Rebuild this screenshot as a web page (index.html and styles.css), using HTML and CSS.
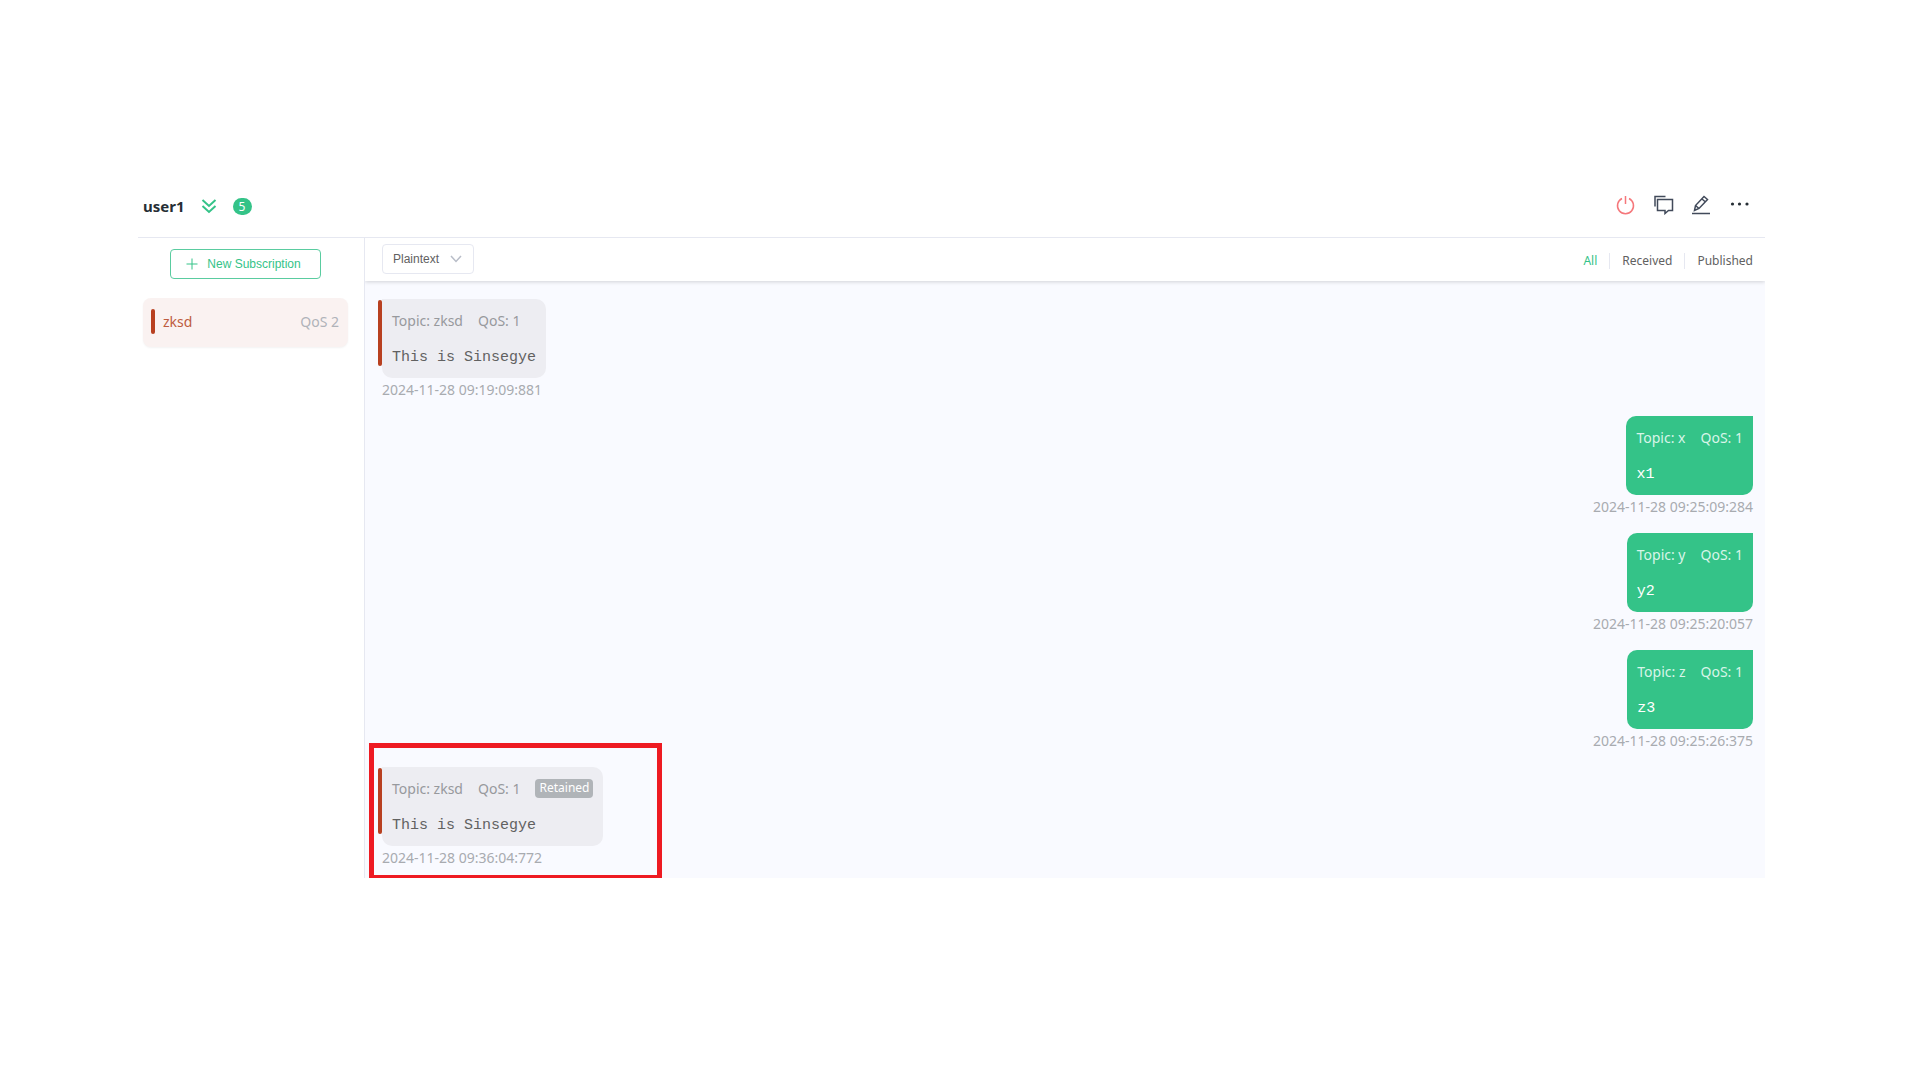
FILE: index.html
```html
<!DOCTYPE html>
<html lang="en">
<head>
    <meta charset="UTF-8" />
    <title>user1</title>
    <link rel="stylesheet" href="styles.css">
</head>
<body>

<div class="connection">
    <header class="topbar">
        <h2>user1</h2>
        <button class="icon-btn collapse" aria-label="Show details">
            <svg width="16" height="16" viewBox="0 0 16 16"><path d="M1.5 2L8 8l6.5-6M1.5 8L8 14l6.5-6" /></svg>
        </button>
        <span class="count">5</span>
        <div class="actions">
            <button class="icon-btn power" aria-label="Disconnect">
                <svg width="20" height="20" viewBox="0 0 20 20"><path d="M9.5 1v8M6 3.5a8 8 0 1 0 7 0" /></svg>
            </button>
            <button class="icon-btn" aria-label="New window">
                <svg width="20" height="20" viewBox="0 0 20 20"><path d="M1 11.500V1.500h10.500M3.500 4.500h15v11h-4L11 18.500v-3H3.500z" /></svg>
            </button>
            <button class="icon-btn" aria-label="Edit">
                <svg width="20" height="20" viewBox="0 0 20 20"><path d="M0 18.500h18M2.500 15.500l1-5L12 1.500l3.500 3-8.500 9zM10 4l3.500 3M3.500 10.500l3.500 3" /></svg>
            </button>
            <button class="icon-btn more" aria-label="More">
                <svg width="20" height="20" viewBox="0 0 20 20"><circle cx="2.500" cy="9" r="1.600" /><circle cx="9.500" cy="9" r="1.600" /><circle cx="17" cy="9" r="1.600" /></svg>
            </button>
        </div>
    </header>

    <div class="content">
        <aside class="subscriptions">
            <button class="new-sub">
                <svg width="12" height="12" viewBox="0 0 12 12"><path d="M6 .5v11M.5 6h11" /></svg>
                New Subscription
            </button>
            <div class="topic-item">
                <span class="topic-name">zksd</span>
                <span class="topic-qos">QoS 2</span>
            </div>
        </aside>

        <main class="chat">
            <div class="filter-bar">
                <div class="select-wrap">
                    <select aria-label="Payload format">
                        <option>Plaintext</option>
                        <option>JSON</option>
                        <option>Hex</option>
                    </select>
                    <svg width="12" height="8" viewBox="0 0 12 8"><path d="M1 1l5 5.500L11 1" /></svg>
                </div>
                <nav class="filters">
                    <a href="#" class="active">All</a>
                    <a href="#">Received</a>
                    <a href="#">Published</a>
                </nav>
            </div>

            <div class="messages">
                <div class="message received">
                    <div class="bubble">
                        <p class="meta"><span>Topic: zksd</span><span>QoS: 1</span></p>
                        <pre>This is Sinsegye</pre>
                    </div>
                    <time>2024-11-28 09:19:09:881</time>
                </div>
                <div class="message sent">
                    <div class="bubble">
                        <p class="meta"><span>Topic: x</span><span>QoS: 1</span></p>
                        <pre>x1</pre>
                    </div>
                    <time>2024-11-28 09:25:09:284</time>
                </div>
                <div class="message sent">
                    <div class="bubble">
                        <p class="meta"><span>Topic: y</span><span>QoS: 1</span></p>
                        <pre>y2</pre>
                    </div>
                    <time>2024-11-28 09:25:20:057</time>
                </div>
                <div class="message sent">
                    <div class="bubble">
                        <p class="meta"><span>Topic: z</span><span>QoS: 1</span></p>
                        <pre>z3</pre>
                    </div>
                    <time>2024-11-28 09:25:26:375</time>
                </div>
                <div class="message received">
                    <div class="bubble">
                        <p class="meta"><span>Topic: zksd</span><span>QoS: 1</span><span class="retained">Retained</span></p>
                        <pre>This is Sinsegye</pre>
                    </div>
                    <time>2024-11-28 09:36:04:772</time>
                    <div class="highlight"></div>
                </div>
            </div>
        </main>
    </div>
</div>

</body>
</html>
```
FILE: styles.css
```css
* {
    box-sizing: border-box;
}

body {
    margin: 0;
    padding: 177px 155px 0 138px;
    background: #fff;
    color: #616161;
    font-family: "Noto Sans", "Open Sans", sans-serif;
    font-size: 14px;
    line-height: 20px;
}

svg {
    display: block;
    fill: none;
    stroke: currentColor;
    stroke-width: 1.5;
}

button {
    font: inherit;
    cursor: pointer;
}

/* header */
.topbar {
    display: flex;
    align-items: center;
    height: 61px;
    padding: 0 15px 2px 5px;
    border-bottom: 1px solid #e6e8f1;
}

.topbar h2 {
    margin: 0;
    color: #262e35;
    font-size: 15px;
}

.icon-btn {
    padding: 0;
    border: 0;
    background: none;
    color: #414a5a;
}

.collapse {
    margin: 0 16px;
    color: #34c388;
}

.collapse svg {
    stroke-width: 2;
}

.count {
    width: 19px;
    height: 17px;
    border-radius: 9px;
    background: #34c388;
    color: #fff;
    font-size: 12px;
    line-height: 18px;
    text-align: center;
}

.actions {
    display: flex;
    gap: 18px;
    margin-left: auto;
    padding-bottom: 2px;
}

.power {
    color: #f5777b;
}

.more svg {
    fill: #262e35;
    stroke: none;
}

.content {
    display: flex;
}

/* subscriptions */
.subscriptions {
    width: 227px;
    padding: 11px 16px 0 5px;
    border-right: 1px solid #e6e8f1;
}

.new-sub {
    display: flex;
    align-items: center;
    justify-content: center;
    gap: 9px;
    width: 151px;
    height: 30px;
    margin: 0 auto 19px;
    padding: 0 4px 0 0;
    border: 1px solid #5acca0;
    border-radius: 4px;
    background: #fff;
    color: #34c388;
    font-family: "Liberation Sans", Arial, sans-serif;
    font-size: 12px;
}

.new-sub svg {
    stroke-width: 1;
}

.topic-item {
    display: flex;
    align-items: center;
    height: 49px;
    padding: 0 9px 2px 8px;
    border-radius: 8px;
    background: #faf2f1;
    box-shadow: 0 1px 2px rgba(0, 0, 0, 0.05);
}

.topic-item::before {
    content: "";
    width: 4px;
    height: 25px;
    margin-right: 8px;
    border-radius: 2px;
    background: #b84020;
}

.topic-name {
    color: #be5c40;
}

.topic-qos {
    margin-left: auto;
    color: #b0b3b9;
}

/* messages */
.chat {
    flex: 1;
    background: #f9faff;
}

.filter-bar {
    display: flex;
    align-items: center;
    justify-content: space-between;
    height: 43px;
    padding: 0 12px 0 17px;
    background: #fff;
    box-shadow: 0 1px 4px rgba(0, 0, 0, 0.16);
    clip-path: inset(0 0 -6px 0);
}

.select-wrap {
    position: relative;
}

.select-wrap select {
    display: block;
    width: 92px;
    height: 30px;
    margin-bottom: 2px;
    padding: 0 10px;
    border: 1px solid #e6e8f1;
    border-radius: 4px;
    background: #fff;
    color: #616161;
    font-family: "Liberation Sans", Arial, sans-serif;
    font-size: 12px;
    appearance: none;
}

.select-wrap svg {
    position: absolute;
    top: 11px;
    right: 12px;
    color: #b8bdc8;
    pointer-events: none;
}

.filters {
    display: flex;
    padding-top: 2px;
    font-size: 12px;
    line-height: 16px;
}

.filters a {
    padding-left: 12px;
    color: #616161;
    text-decoration: none;
}

.filters a + a {
    margin-left: 12px;
    border-left: 1px solid #e6e8f1;
}

.filters .active {
    color: #34c388;
}

.messages {
    display: flex;
    flex-direction: column;
    gap: 17px;
    padding: 18px 12px 11px 17px;
    overflow: hidden;
}

.message {
    position: relative;
    display: flex;
    flex-direction: column;
    align-items: flex-start;
}

.sent {
    align-items: flex-end;
}

.bubble {
    position: relative;
    height: 79px;
    padding: 12px 10px;
    border-radius: 10px;
    background: #ededf2;
}

.received .bubble {
    border-top-left-radius: 0;
}

.received .bubble::before {
    content: "";
    position: absolute;
    top: 1px;
    left: -4px;
    width: 4px;
    height: 66px;
    border-radius: 2px;
    background: #b84020;
}

.sent .bubble {
    border-top-right-radius: 0;
    background: #34c388;
    color: #fff;
}

.meta {
    display: flex;
    gap: 15px;
    margin: 0 0 17px;
    color: #97999d;
}

.sent .meta {
    color: #d8f5e9;
}

.retained {
    height: 19px;
    padding: 0 4px;
    border-radius: 4px;
    background: #b0b4b8;
    color: #fff;
    font-size: 12px;
    line-height: 18px;
}

.bubble pre {
    margin: 0;
    font-family: "Liberation Mono", "Courier New", monospace;
    font-size: 15px;
    line-height: 20px;
}

time {
    height: 21px;
    color: #a8abb0;
    line-height: 24px;
}

.highlight {
    position: absolute;
    top: -24px;
    left: -13px;
    width: 293px;
    height: 137px;
    border: 5px solid #ee1a22;
}
```
